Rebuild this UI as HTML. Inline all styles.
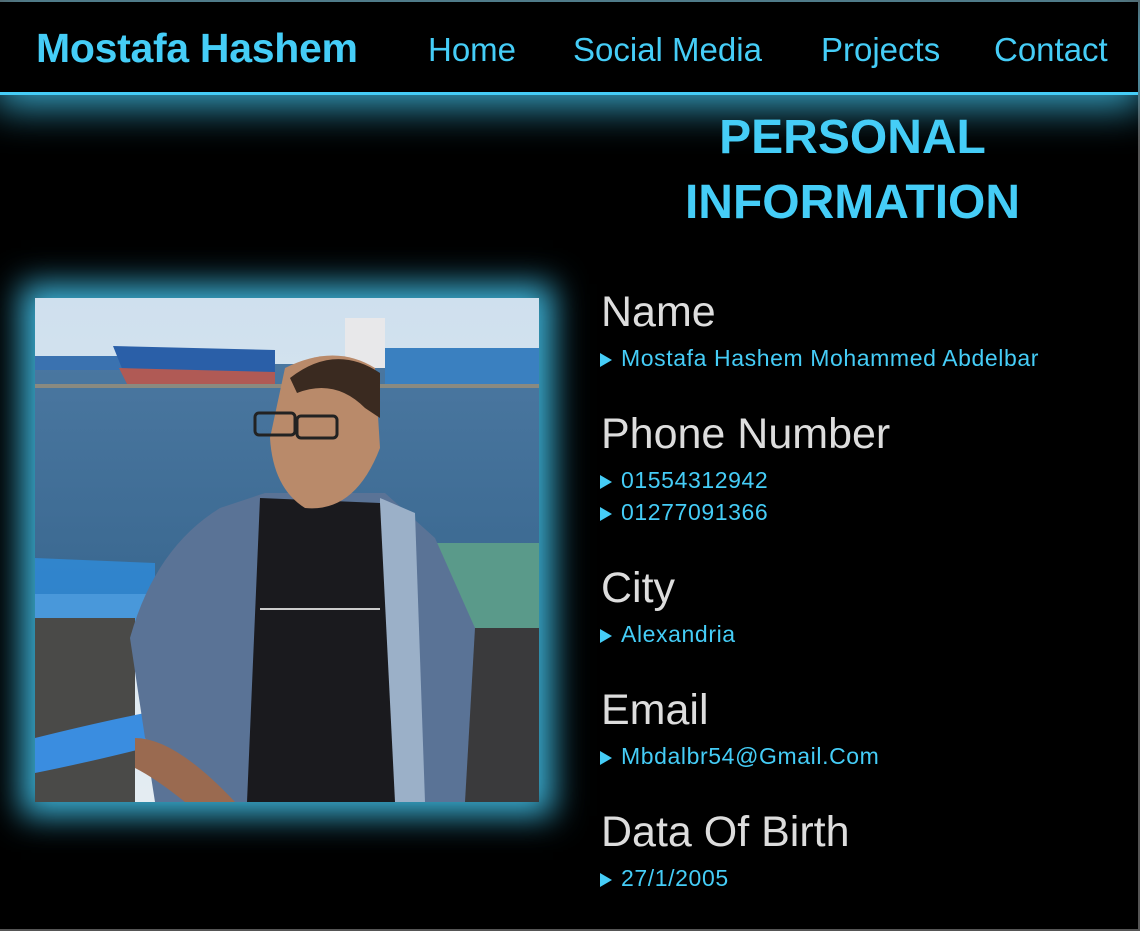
<!DOCTYPE html>
<html><head><meta charset="utf-8"><style>
html,body{margin:0;padding:0;background:#000;}
body{width:1140px;height:931px;position:relative;overflow:hidden;font-family:"Liberation Sans","DejaVu Sans",sans-serif;}
.frame{position:absolute;left:0;top:0;border-top:2px solid #555;border-right:2px solid #555;border-bottom:2px solid #555;box-sizing:border-box;width:1140px;height:931px;}
.hdr{position:absolute;left:0;top:2px;width:1138px;height:90px;border-bottom:3px solid #45cdf7;box-shadow:0 8px 40px 4px rgba(69,205,247,0.8);background:#000;}
.logo{position:absolute;left:36px;top:25px;color:#45cdf7;font-weight:bold;font-size:41px;letter-spacing:-0.3px;}
.nav{position:absolute;top:31px;color:#45cdf7;font-size:33px;}
.t{position:absolute;left:600px;width:505px;text-align:center;color:#45cdf7;font-weight:bold;font-size:48px;line-height:65px;top:105px;}
.h{position:absolute;left:601px;color:#ddd;font-size:43px;}
.i{position:absolute;left:600px;color:#45cdf7;font-size:23px;letter-spacing:0.6px;}
.i:before{content:"";display:inline-block;width:0;height:0;border-left:12px solid #45cdf7;border-top:7px solid transparent;border-bottom:7px solid transparent;margin-right:9px;vertical-align:-1px;}
.ph{position:absolute;left:35px;top:298px;width:504px;height:504px;box-shadow:0 0 30px 14px rgba(69,205,247,0.85);}
</style></head><body>
<div class="frame"></div>
<div class="hdr"></div>
<div class="logo">Mostafa Hashem</div>
<div class="nav" style="left:428px">Home</div>
<div class="nav" style="left:573px">Social Media</div>
<div class="nav" style="left:821px">Projects</div>
<div class="nav" style="left:994px">Contact</div>
<div class="t">PERSONAL<br>INFORMATION</div>
<div class="ph"><svg width="504" height="504" viewBox="0 0 504 504">
<defs><linearGradient id="sky" x1="0" y1="0" x2="0" y2="1"><stop offset="0" stop-color="#cfe0ee"/><stop offset="1" stop-color="#e4ecf2"/></linearGradient>
<linearGradient id="w" x1="0" y1="0" x2="0" y2="1"><stop offset="0" stop-color="#4a77a0"/><stop offset="1" stop-color="#3a6890"/></linearGradient></defs>
<rect width="504" height="504" fill="url(#sky)"/>
<rect y="66" width="504" height="230" fill="url(#w)"/>
<rect x="0" y="58" width="90" height="14" fill="#3a72b0"/>
<path d="M78 48 L240 52 L240 80 L90 78 Z" fill="#2a5fa8"/>
<path d="M84 70 L240 74 L240 90 L92 86 Z" fill="#b05a55"/>
<rect x="310" y="20" width="40" height="50" fill="#e8e8ea"/>
<rect x="350" y="50" width="154" height="36" fill="#3a80c0"/>
<rect x="0" y="86" width="504" height="4" fill="#8a8a80"/>
<rect x="400" y="245" width="104" height="259" fill="#5a9a8a"/>
<path d="M0 260 L120 265 L120 330 L0 330 Z" fill="#2f8ad6" opacity="0.85"/>
<rect x="0" y="320" width="100" height="184" fill="#4a4a48"/>
<rect x="420" y="330" width="84" height="174" fill="#3a3a3c"/>
<path d="M0 440 Q60 425 110 415 L110 450 Q50 465 0 475 Z" fill="#3a8de0"/>
<path d="M95 340 Q120 250 185 210 L230 195 L350 195 L400 240 L440 330 L430 504 L120 504 L110 440 Z" fill="#5a7396"/>
<path d="M345 200 L380 215 L390 504 L345 504 Z" fill="#9bb0c8"/>
<path d="M225 200 L345 205 L360 504 L212 504 Z" fill="#1a1a1e"/>
<rect x="225" y="310" width="120" height="2" fill="#ccc"/>
<path d="M100 440 Q140 440 200 504 L150 504 Q120 480 100 470 Z" fill="#9a6a50"/>
<path d="M250 70 Q300 45 340 70 L345 150 Q320 215 270 210 Q238 190 235 140 Z" fill="#b98a6a"/>
<path d="M255 80 Q300 45 345 75 L345 120 L330 110 Q300 80 262 95 Z" fill="#3a2a20"/>
<rect x="220" y="115" width="40" height="22" rx="4" fill="none" stroke="#222" stroke-width="3"/>
<rect x="262" y="118" width="40" height="22" rx="4" fill="none" stroke="#222" stroke-width="3"/>
</svg></div>
<div class="h" style="top:288px">Name</div>
<div class="i" style="top:345px">Mostafa Hashem Mohammed Abdelbar</div>
<div class="h" style="top:410px">Phone Number</div>
<div class="i" style="top:467px">01554312942</div>
<div class="i" style="top:499px">01277091366</div>
<div class="h" style="top:564px">City</div>
<div class="i" style="top:621px">Alexandria</div>
<div class="h" style="top:686px">Email</div>
<div class="i" style="top:743px">Mbdalbr54@Gmail.Com</div>
<div class="h" style="top:808px">Data Of Birth</div>
<div class="i" style="top:865px">27/1/2005</div>
</body></html>
